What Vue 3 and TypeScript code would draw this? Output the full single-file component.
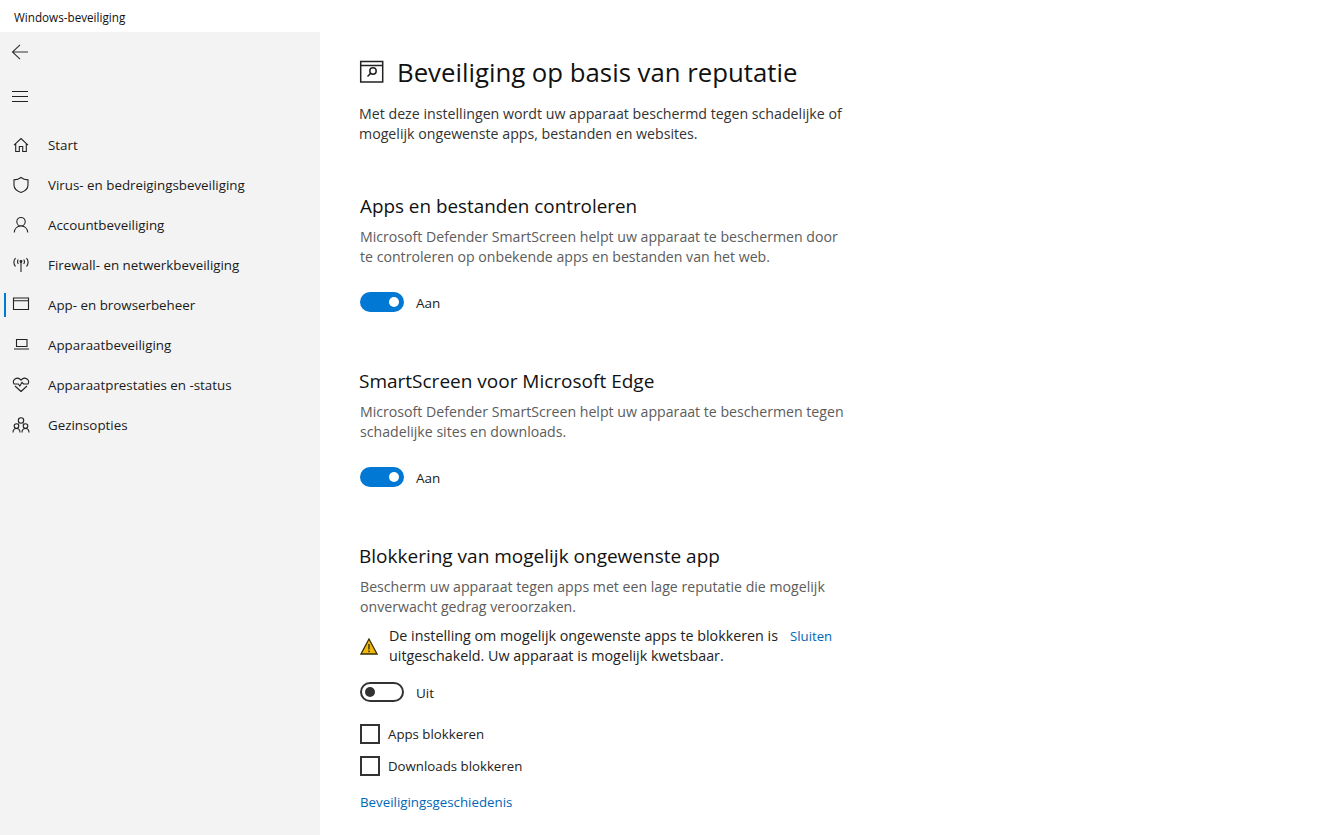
<script setup lang="ts">
const nav = [
  { label: 'Start', icon: 'home' },
  { label: 'Virus- en bedreigingsbeveiliging', icon: 'shield' },
  { label: 'Accountbeveiliging', icon: 'user' },
  { label: 'Firewall- en netwerkbeveiliging', icon: 'wifi' },
  { label: 'App- en browserbeheer', icon: 'app', active: true },
  { label: 'Apparaatbeveiliging', icon: 'laptop' },
  { label: 'Apparaatprestaties en -status', icon: 'heart' },
  { label: 'Gezinsopties', icon: 'family' },
]
</script>

<template>
  <div class="window">
    <header class="titlebar">Windows-beveiliging</header>
    <div class="body">
      <aside class="sidebar">
        <button class="tool back" aria-label="Terug">
          <svg width="18" height="16" viewBox="0 0 18 16" fill="none" stroke="#333" stroke-width="1.1"><path d="M9 .8 1.500 8 9 15.200M1.500 8H17"/></svg>
        </button>
        <button class="tool menu" aria-label="Menu">
          <svg width="16" height="14" viewBox="0 0 16 14" fill="none" stroke="#222" stroke-width="1"><path d="M0 2.500h16M0 7.500h16M0 12.500h16"/></svg>
        </button>
        <nav class="nav">
          <a v-for="item in nav" :key="item.label" class="nav-item" :class="{ active: item.active }">
            <span class="nav-icon">
              <svg width="18" height="18" viewBox="0 0 18 18" fill="none" stroke="#222" stroke-width="1.1">
                <path v-if="item.icon === 'home'" d="M2 9.200 9 2.500l7 6.700M3.700 8v7.500h3.600v-5h3.400v5h3.600V8"/>
                <path v-else-if="item.icon === 'shield'" d="M9 1.500c2 1.600 4.300 2.300 7 2.400V9c0 3.500-2.600 6-7 7.500C4.600 15 2 12.500 2 9V3.900c2.700-.1 5-.8 7-2.400Z"/>
                <path v-else-if="item.icon === 'user'" d="M9 1.500a4.200 4.200 0 1 1 0 8.400 4.200 4.200 0 0 1 0-8.400ZM2.200 16.500c.3-3.800 3-6.600 6.800-6.600s6.500 2.800 6.800 6.600"/>
                <g v-else-if="item.icon === 'wifi'">
                  <path d="M9 6.500v9.500"/><path d="M6.300 3.500c-.9 1.300-.9 3.200 0 4.500M11.700 3.500c.9 1.300.9 3.200 0 4.500M3.500 2c-1.900 2.500-1.900 6 0 8.500M14.500 2c1.900 2.500 1.900 6 0 8.500"/>
                  <circle cx="9" cy="5.500" r=".9" fill="#222"/>
                </g>
                <path v-else-if="item.icon === 'app'" d="M1.500 2h15v11.500h-15ZM1.500 4.700h15"/>
                <path v-else-if="item.icon === 'laptop'" d="M4.500 3.500h10.500v7H4.500ZM2 13h15"/>
                <path v-else-if="item.icon === 'heart'" d="M9 15.500 3 10M15 10l-6 5.500M2 8C.9 6 1.500 4 3 3c1.800-1.200 4.300-.8 6 1.100 1.700-1.900 4.200-2.300 6-1.100 1.500 1 2.100 3 1 5H11.500L10 6.500 7.800 10 6.300 8Z"/>
                <g v-else>
                  <circle cx="9" cy="4.500" r="2.700"/><circle cx="4.500" cy="10" r="2.300"/><circle cx="13.500" cy="10" r="2.300"/>
                  <path d="M1 16.500c0-2.300 1.400-4 3.500-4s3.500 1.700 3.500 4M10 16.500c0-2.300 1.400-4 3.500-4s3.500 1.700 3.500 4M6 7.500l.8 1M12 7.500l-.8 1"/>
                </g>
              </svg>
            </span>
            <span>{{ item.label }}</span>
          </a>
        </nav>
      </aside>
      <main class="main">
        <div class="page-title">
          <svg class="title-icon" width="26" height="24" viewBox="0 0 26 24" fill="none" stroke="#222" stroke-width="1.500">
            <path d="M1.700 1.500h22v20.500h-22ZM1.700 5.500h22"/>
            <circle cx="14" cy="11" r="3.200"/><path d="m11.600 13.400-3.100 3.100"/>
          </svg>
          <h1>Beveiliging op basis van reputatie</h1>
        </div>
        <p class="intro">Met deze instellingen wordt uw apparaat beschermd tegen schadelijke of<br>mogelijk ongewenste apps, bestanden en websites.</p>

        <section class="section">
          <h2>Apps en bestanden controleren</h2>
          <p class="desc">Microsoft Defender SmartScreen helpt uw apparaat te beschermen door<br>te controleren op onbekende apps en bestanden van het web.</p>
          <div class="toggle-row"><span class="toggle on"><i></i></span><span class="state">Aan</span></div>
        </section>

        <section class="section spaced">
          <h2>SmartScreen voor Microsoft Edge</h2>
          <p class="desc">Microsoft Defender SmartScreen helpt uw apparaat te beschermen tegen<br>schadelijke sites en downloads.</p>
          <div class="toggle-row"><span class="toggle on"><i></i></span><span class="state">Aan</span></div>
        </section>

        <section class="section spaced">
          <h2>Blokkering van mogelijk ongewenste app</h2>
          <p class="desc">Bescherm uw apparaat tegen apps met een lage reputatie die mogelijk<br>onverwacht gedrag veroorzaken.</p>
          <div class="warning">
            <svg class="warn-icon" width="18" height="17" viewBox="0 0 18 17">
              <path d="M9 1 17 16H1Z" fill="#f2b90d" stroke="#3a3000" stroke-width="1.300" stroke-linejoin="miter"/>
              <path d="M9 6v5.500M9 12.500v1.700" stroke="#222" stroke-width="1.300"/>
            </svg>
            <p>De instelling om mogelijk ongewenste apps te blokkeren is<br>uitgeschakeld. Uw apparaat is mogelijk kwetsbaar.</p>
            <a class="link close">Sluiten</a>
          </div>
          <div class="toggle-row off-row"><span class="toggle off"><i></i></span><span class="state">Uit</span></div>
          <label class="check first-check"><span class="box"></span>Apps blokkeren</label>
          <label class="check"><span class="box"></span>Downloads blokkeren</label>
          <a class="link history">Beveiligingsgeschiedenis</a>
        </section>
      </main>
    </div>
  </div>
</template>

<style>
html, body { margin: 0; background: #fff; overflow: hidden; }
</style>

<style scoped>
.window {
  width: 1335px;
  height: 835px;
  display: flex;
  flex-direction: column;
  overflow: hidden;
  font-family: "Open Sans", "Noto Sans", sans-serif;
  font-size: 14.2px;
  line-height: 20px;
  color: #111;
  background: #fff;
}
.titlebar { height: 32px; flex: none; box-sizing: border-box; padding: 7px 0 0 14px; font-size: 11.7px; line-height: 20px; color: #111; }
.body { flex: 1; display: flex; min-height: 0; }
.sidebar { width: 320px; flex: none; background: #f3f3f3; display: flex; flex-direction: column; font-size: 13.35px; }
.tool { width: 40px; height: 40px; padding: 0; border: 0; background: none; display: flex; align-items: center; justify-content: center; }
.menu { margin-top: 4px; }
.nav { margin-top: 9px; display: flex; flex-direction: column; }
.nav-item { position: relative; height: 40px; display: flex; align-items: center; color: #1a1a1a; }
.nav-icon { width: 48px; padding-left: 12px; box-sizing: border-box; display: flex; }
.nav-item.active::before { content: ""; position: absolute; left: 4px; top: 8px; width: 2px; height: 24px; background: #0078d4; }
.main { flex: 1; padding-left: 39px; }
.page-title { display: flex; align-items: center; height: 40px; margin-top: 20px; gap: 12px; }
.title-icon { flex: none; }
h1 { margin: 0; font-size: 25.75px; font-weight: 400; line-height: 40px; color: #111; }
.intro { margin: 12px 0 0; color: #333; }
.section { margin-top: 47px; }
.section.spaced { margin-top: 54px; }
h2 { margin: 0; font-size: 19px; font-weight: 400; line-height: 30px; color: #111; }
.section:first-of-type h2 { padding-left: 1px; font-size: 18.85px; }
.desc { margin: 6px 0 0; color: #5c5c5c; padding-left: 1px; font-size: 14.15px; }
.toggle-row { display: flex; align-items: center; gap: 12px; margin: 25px 0 0 1px; color: #222; }
.state { font-size: 13.5px; position: relative; top: 1px; }
.toggle { width: 44px; height: 20px; box-sizing: border-box; border-radius: 10px; display: flex; align-items: center; flex: none; }
.toggle i { width: 10px; height: 10px; border-radius: 50%; }
.toggle.on { background: #0078d4; justify-content: flex-end; padding-right: 5px; }
.toggle.on i { background: #fff; }
.toggle.off { border: 2px solid #333; padding-left: 3px; }
.toggle.off i { background: #333; }
.warning { display: flex; margin: 9px 0 0 1px; position: relative; }
.warn-icon { flex: none; margin: 12px 11px 0 0; }
.warning p { margin: 0; color: #222; white-space: nowrap; font-size: 14.3px; }
.close { position: absolute; left: 430px; top: 0; font-size: 13.2px; }
.link { color: #0067b8; }
.off-row { margin-top: 16px; }
.check { display: flex; align-items: center; gap: 8px; height: 20px; margin: 12px 0 0 1px; color: #222; font-size: 13.25px; }
.first-check { margin-top: 22px; }
.box { width: 20px; height: 20px; box-sizing: border-box; border: 2px solid #333; flex: none; }
.history { display: block; margin: 16px 0 0 1px; font-size: 13.3px; }
</style>
